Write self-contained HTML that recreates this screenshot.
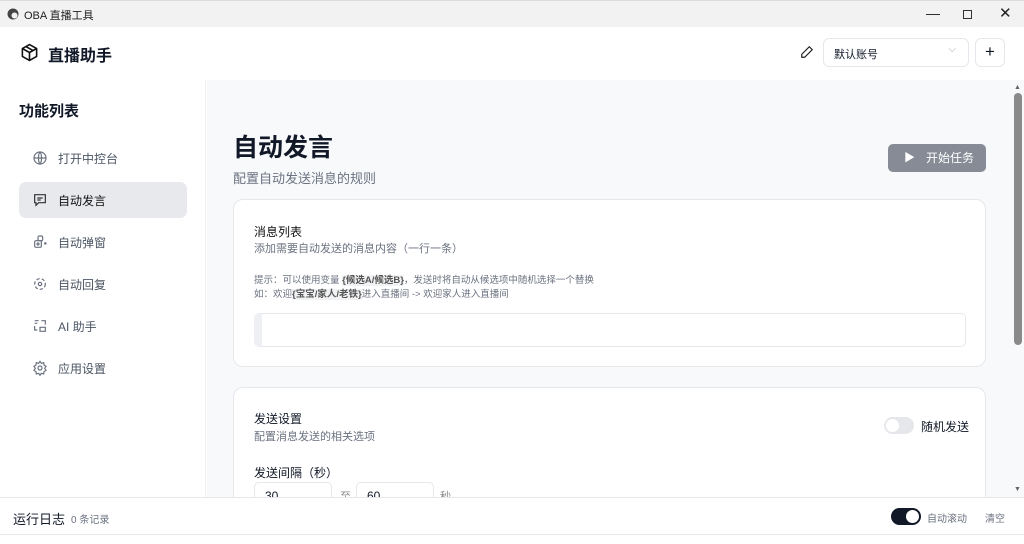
<!DOCTYPE html>
<html><head><meta charset="utf-8"><style>
*{box-sizing:border-box;margin:0;padding:0}
body{width:1024px;height:544px;overflow:hidden;background:#fff;font-family:"Liberation Sans","Noto Sans CJK SC",sans-serif;color:#111827;position:relative}
.abs{position:absolute}
.tb{left:0;top:0;width:1024px;height:27px;background:#f1f2f1;border-top:1px solid #ddd}
.tb span{font-size:11px;color:#222}
.side{left:0;top:80px;width:206px;height:417px;background:#fff;border-right:1px solid #eef0f3}
.main{left:207px;top:80px;width:817px;height:417px;background:#f8f9fb}
.nav{left:19px;width:168px;height:36px;border-radius:7px;font-size:12px;color:#4b5563;display:flex;align-items:center;padding-left:13px}
.nav svg{margin-right:10px}
.card{background:#fff;border:1px solid #e5e7eb;border-radius:10px;left:233px;width:753px}
.foot{left:0;top:497px;width:1024px;height:38px;background:#fff;border-top:1px solid #e5e7eb;border-bottom:1px solid #e5e7eb}
</style></head><body>
<div class="abs tb">
<svg class="abs" style="left:7px;top:7px" width="12" height="12" viewBox="0 0 12 12"><circle cx="6" cy="6" r="5.5" fill="#444"/><circle cx="7.5" cy="7.5" r="3" fill="#f1f2f1"/></svg>
<span class="abs" style="left:24px;top:6px">OBA 直播工具</span>
<span class="abs" style="left:926px;top:4px;font-size:14px">—</span>
<div class="abs" style="left:963px;top:9px;width:9px;height:9px;border:1.2px solid #333"></div>
<span class="abs" style="left:999px;top:3px;font-size:15px">✕</span>
</div>
<svg class="abs" style="left:20px;top:43px" width="19" height="19" viewBox="0 0 24 24" fill="none" stroke="#111" stroke-width="2" stroke-linejoin="round"><path d="M12 2l9 5v10l-9 5-9-5V7z M3 7l9 5 9-5 M12 12v10 M7.5 4.5l9 5"/></svg>
<div class="abs" style="left:48px;top:42px;font-size:16px;font-weight:bold">直播助手</div>
<svg class="abs" style="left:800px;top:45px" width="14" height="14" viewBox="0 0 24 24" fill="none" stroke="#222" stroke-width="2"><path d="M16 3l5 5L8 21H3v-5z"/></svg>
<div class="abs" style="left:823px;top:38px;width:146px;height:29px;border:1px solid #e5e7eb;border-radius:6px;font-size:11px;padding:7px 10px">默认账号<span style="position:absolute;right:12px;top:5px;color:#aaa;font-size:10px">⌵</span></div>
<div class="abs" style="left:975px;top:38px;width:30px;height:29px;border:1px solid #e5e7eb;border-radius:6px;text-align:center;font-size:17px;line-height:26px">+</div>
<div class="abs side"></div>
<div class="abs main"></div>
<div class="abs" style="left:19px;top:100px;font-size:15px;font-weight:bold">功能列表</div>
<div class="abs nav" style="top:140px"><svg width="16" height="16" viewBox="0 0 24 24" fill="none" stroke="#6b7280" stroke-width="1.8"><circle cx="12" cy="12" r="9"/><path d="M3 12h18M12 3c3 3 3 15 0 18M12 3c-3 3-3 15 0 18"/></svg>打开中控台</div>
<div class="abs nav" style="top:182px;background:#e8e9ec;color:#111"><svg width="16" height="16" viewBox="0 0 24 24" fill="none" stroke="#333" stroke-width="1.8"><path d="M4 4h16v12H10l-4 4v-4H4z M8 9h8M8 12h5"/></svg>自动发言</div>
<div class="abs nav" style="top:224px"><svg width="16" height="16" viewBox="0 0 24 24" fill="none" stroke="#6b7280" stroke-width="1.8"><rect x="4" y="10" width="10" height="10" rx="2"/><rect x="9" y="3" width="7" height="7" rx="2"/><circle cx="9" cy="15" r="1.5"/><circle cx="20" cy="14" r="1"/></svg>自动弹窗</div>
<div class="abs nav" style="top:266px"><svg width="16" height="16" viewBox="0 0 24 24" fill="none" stroke="#6b7280" stroke-width="1.8" stroke-dasharray="5 3"><circle cx="12" cy="12" r="8"/><circle cx="12" cy="12" r="2.5" stroke-dasharray="none"/></svg>自动回复</div>
<div class="abs nav" style="top:308px"><svg width="16" height="16" viewBox="0 0 24 24" fill="none" stroke="#6b7280" stroke-width="1.8"><path d="M4 4h6M4 8h4M4 12v6h4M14 4h6v6M12 14h8v6h-8z"/></svg>AI 助手</div>
<div class="abs nav" style="top:350px"><svg width="16" height="16" viewBox="0 0 24 24" fill="none" stroke="#6b7280" stroke-width="1.8"><circle cx="12" cy="12" r="3"/><path d="M12 2l2 3 3.5-1 .5 3.5 3 2-2 3 2 3-3 2-.5 3.5-3.5-1-2 3-2-3-3.5 1-.5-3.5-3-2 2-3-2-3 3-2 .5-3.5 3.5 1z"/></svg>应用设置</div>
<div class="abs" style="left:233px;top:128px;font-size:25px;font-weight:bold">自动发言</div>
<div class="abs" style="left:233px;top:168px;font-size:13px;color:#6b7280">配置自动发送消息的规则</div>
<div class="abs" style="left:888px;top:144px;width:98px;height:28px;background:#868b96;border-radius:5px;color:#fff;font-size:12px;line-height:28px;padding-left:38px">开始任务<span style="position:absolute;left:16px;top:0;font-size:11px">▶</span></div>
<div class="abs card" style="top:199px;height:168px">
<div class="abs" style="left:20px;top:23px;font-size:12px;color:#111">消息列表</div>
<div class="abs" style="left:20px;top:40px;font-size:11px;color:#6b7280">添加需要自动发送的消息内容（一行一条）</div>
<div class="abs" style="left:20px;top:74px;font-size:9.5px;color:#6b7280;line-height:14px">提示：可以使用变量 <b style="background:#f1f2f4;color:#555">{候选A/候选B}</b>，发送时将自动从候选项中随机选择一个替换<br>如：欢迎<b style="background:#f1f2f4;color:#555">{宝宝/家人/老铁}</b>进入直播间 -&gt; 欢迎家人进入直播间</div>
<div class="abs" style="left:20px;top:113px;width:712px;height:34px;border:1px solid #e5e7eb;border-radius:5px;border-left:8px solid #eef0f3"></div>
</div>
<div class="abs card" style="top:387px;height:130px">
<div class="abs" style="left:20px;top:22px;font-size:12px">发送设置</div>
<div class="abs" style="left:20px;top:40px;font-size:11px;color:#6b7280">配置消息发送的相关选项</div>
<div class="abs" style="left:650px;top:29px;width:30px;height:17px;border-radius:9px;background:#e5e7eb"><div style="position:absolute;left:2px;top:2px;width:13px;height:13px;border-radius:50%;background:#fff"></div></div>
<div class="abs" style="left:687px;top:30px;font-size:12px">随机发送</div>
<div class="abs" style="left:20px;top:76px;font-size:12px">发送间隔（秒）</div>
<div class="abs" style="left:20px;top:94px;width:78px;height:30px;border:1px solid #e5e7eb;border-radius:5px;font-size:12px;padding:6px 10px">30</div>
<div class="abs" style="left:106px;top:100px;font-size:11px;color:#888">至</div>
<div class="abs" style="left:122px;top:94px;width:78px;height:30px;border:1px solid #e5e7eb;border-radius:5px;font-size:12px;padding:6px 10px">60</div>
<div class="abs" style="left:206px;top:100px;font-size:11px;color:#888">秒</div>
</div>
<div class="abs" style="left:1014px;top:84px;font-size:7px;color:#666">▲</div>
<div class="abs" style="left:1014px;top:93px;width:8px;height:252px;background:#8a8a8a;border-radius:4px"></div>
<div class="abs" style="left:1014px;top:486px;font-size:7px;color:#666">▼</div>
<div class="abs foot">
<div class="abs" style="left:13px;top:11px;font-size:13px">运行日志</div>
<div class="abs" style="left:71px;top:13px;font-size:10px;color:#6b7280">0 条记录</div>
<div class="abs" style="left:891px;top:10px;width:30px;height:17px;border-radius:9px;background:#111827"><div style="position:absolute;right:2px;top:2px;width:13px;height:13px;border-radius:50%;background:#fff"></div></div>
<div class="abs" style="left:927px;top:12px;font-size:10px;color:#6b7280">自动滚动</div>
<div class="abs" style="left:985px;top:12px;font-size:10px;color:#6b7280">清空</div>
</div>
</body></html>
